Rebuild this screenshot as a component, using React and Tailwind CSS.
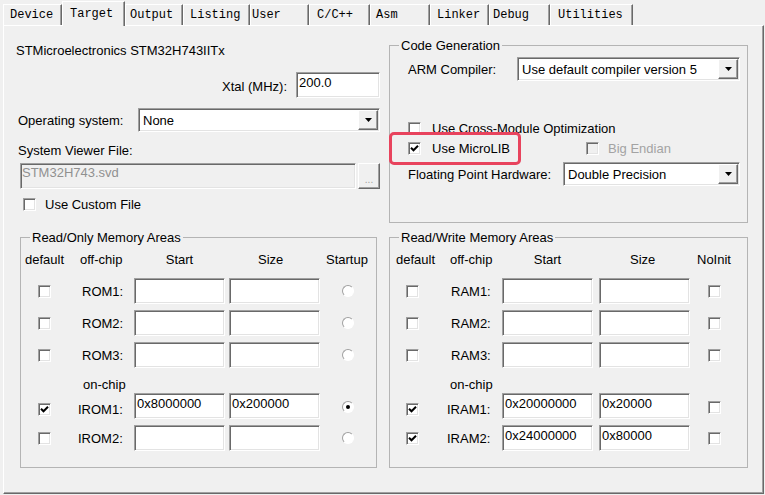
import React from 'react'

const sunken =
  'border border-t-[#a0a0a0] border-l-[#a0a0a0] border-r-white border-b-white shadow-[inset_1px_1px_0_#696969,inset_-1px_-1px_0_#e3e3e3]'
const raised =
  'border border-t-white border-l-white border-r-[#696969] border-b-[#696969] shadow-[inset_-1px_-1px_0_#a0a0a0]'

const tabs = [
  { label: 'Device', w: 'w-[59px]', pl: 'pl-[6px]' },
  { label: 'Target', w: 'w-[63px]', pl: 'pl-[7px]', active: true },
  { label: 'Output', w: 'w-[58px]', pl: 'pl-[4px]' },
  { label: 'Listing', w: 'w-[67px]', pl: 'pl-[6px]' },
  { label: 'User', w: 'w-[59px]', pl: 'pl-[1px]' },
  { label: 'C/C++', w: 'w-[61px]', pl: 'pl-[7px]' },
  { label: 'Asm', w: 'w-[60px]', pl: 'pl-[5px]' },
  { label: 'Linker', w: 'w-[59px]', pl: 'pl-[6px]' },
  { label: 'Debug', w: 'w-[61px]', pl: 'pl-[3px]' },
  { label: 'Utilities', w: 'w-[83px]', pl: 'pl-[7px]' },
]

const Tab = ({ label, w, pl, active }) => (
  <div
    className={`${w} ${pl} flex items-center bg-[#f0f0f0] border-t border-l border-r border-t-white border-l-white border-r-[#696969] shadow-[inset_-1px_0_0_#a0a0a0] font-['Liberation_Mono',monospace] text-[12px] ${
      active ? 'h-[25px] -mb-px relative z-10' : 'h-[21px]'
    }`}
  >
    {label}
  </div>
)

const Checkbox = ({ checked, disabled }) => (
  <div
    className={`w-[13px] h-[13px] shrink-0 ${sunken} ${
      disabled ? 'bg-[#f0f0f0]' : 'bg-white'
    } flex items-center justify-center`}
  >
    {checked && (
      <svg width="9" height="9" viewBox="0 0 9 9" className="block">
        <path d="M1 3.8L3.5 6.3L8 1.8" fill="none" stroke="#000" strokeWidth="2" />
      </svg>
    )}
  </div>
)

const Radio = ({ checked }) => (
  <div className="w-[12px] h-[12px] shrink-0 rounded-full border border-t-[#a0a0a0] border-l-[#a0a0a0] border-r-white border-b-white bg-white flex items-center justify-center">
    {checked && <div className="w-[4px] h-[4px] rounded-full bg-black" />}
  </div>
)

const Field = ({ value, className = '', disabled }) => (
  <div
    className={`${sunken} h-[26px] px-[2px] pt-[2px] whitespace-nowrap ${
      disabled ? 'bg-[#f0f0f0] text-[#909090]' : 'bg-white'
    } ${className}`}
  >
    {value}
  </div>
)

const Select = ({ value, className = '' }) => (
  <div className={`${sunken} bg-white h-[24px] flex p-[1px] ${className}`}>
    <div className="flex-1 flex items-center pl-[3px] whitespace-nowrap">{value}</div>
    <div className={`${raised} w-[20px] bg-[#f0f0f0] flex items-center justify-center`}>
      <svg width="7" height="4" viewBox="0 0 7 4" className="block">
        <path d="M0 0H7L3.5 4Z" fill="#000" />
      </svg>
    </div>
  </div>
)

const MemRow = ({ cols, label, labelCls, start, size, def, last, radio, low, className = '' }) => (
  <div className={`flex h-[26px] ${className}`}>
    <div className={`${cols.c1} flex items-center ${low ? 'pt-[6px]' : ''}`}>
      <Checkbox checked={def} />
    </div>
    <div className={`${cols.c2} ${labelCls} flex items-center ${low ? 'pt-[6px]' : ''}`}>{label}</div>
    <Field value={start} className="w-[91px]" />
    <Field value={size} className={`w-[91px] ${cols.gap}`} />
    <div className={`${cols.c5} flex items-center ${low ? 'pt-[2px]' : ''}`}>
      {radio ? <Radio checked={last} /> : <Checkbox checked={last} />}
    </div>
  </div>
)

const roCols = { c1: 'w-[55px] pl-[17px]', c2: 'w-[58px]', gap: 'ml-[4px]', c5: 'w-[55px] pl-[22px]' }
const rwCols = { c1: 'w-[57px] pl-[16px]', c2: 'w-[55px]', gap: 'ml-[6px]', c5: 'w-[56px] pl-[18px]' }

export default function App() {
  return (
    <div className="w-[765px] h-[495px] bg-[#f0f0f0] overflow-hidden text-[13px] leading-[15px] text-black font-['Liberation_Sans',Arial,sans-serif]">
      {/* Tabs */}
      <div className="flex items-end h-[25px] pl-[3px]">
        {tabs.map((t) => (
          <Tab key={t.label} {...t} />
        ))}
      </div>

      {/* Tab page */}
      <div className="ml-[3px] w-[761px] h-[469px] border border-t-white border-l-white border-r-[#696969] border-b-[#696969] shadow-[inset_-1px_-1px_0_#a0a0a0] pl-[12px] grid grid-cols-[364px_359px] grid-rows-[204px_238px] gap-x-[9px]">
        {/* Device info */}
        <div className="flex flex-col">
          <div className="mt-[17px]">STMicroelectronics STM32H743IITx</div>
          <div className="mt-[14px] flex items-center justify-end">
            <span className="mt-[3px]">Xtal (MHz):</span>
            <Field value="200.0" className="w-[84px] ml-[9px]" />
          </div>
          <div className="mt-[10px] flex items-center pl-[2px]">
            <span className="w-[120px]">Operating system:</span>
            <Select value="None" className="w-[242px]" />
          </div>
          <div className="mt-[11px] pl-[2px]">System Viewer File:</div>
          <div className="mt-[5px] flex pl-[4px]">
            <Field value="STM32H743.svd" disabled className="w-[336px] !px-[1px] !pt-[1px]" />
            <div className={`${raised} ml-[2px] w-[22px] h-[26px] flex items-end justify-center pb-[3px] text-[10px] leading-[10px] text-[#a0a0a0]`}>
              ...
            </div>
          </div>
          <div className="mt-[9px] flex items-center h-[13px] pl-[7px]">
            <Checkbox />
            <span className="ml-[9px]">Use Custom File</span>
          </div>
        </div>

        {/* Code Generation */}
        <div className="relative">
          <fieldset className="mt-[12px] h-[185px] border border-[#b4b4b4]">
            <legend className="ml-[9px] px-[2px]">Code Generation</legend>
            <div className="mt-[4px] flex items-center pl-[18px]">
              <span className="w-[109px]">ARM Compiler:</span>
              <Select value="Use default compiler version 5" className="w-[223px]" />
            </div>
            <div className="mt-[41px] flex items-center h-[13px] pl-[18px]">
              <Checkbox />
              <span className="ml-[11px] whitespace-nowrap">Use Cross-Module Optimization</span>
            </div>
            <div className="mt-[7px] flex items-center h-[13px] pl-[18px]">
              <Checkbox checked />
              <span className="ml-[11px] w-[154px]">Use MicroLIB</span>
              <Checkbox disabled />
              <span className="ml-[9px] text-[#a3a3a3]">Big Endian</span>
            </div>
            <div className="mt-[7px] flex items-center pl-[18px]">
              <span className="w-[155px] whitespace-nowrap">Floating Point Hardware:</span>
              <Select value="Double Precision" className="w-[177px]" />
            </div>
          </fieldset>
          {/* highlight marker */}
          <div className="absolute left-0 top-[106px] w-[132px] h-[33px] border-[3px] border-[#e8435d] rounded-[5px]" />
        </div>

        {/* Read/Only Memory Areas */}
        <fieldset className="ml-[4px] w-[357px] h-[238px] border border-[#b4b4b4]">
          <legend className="ml-[9px] px-[2px]">Read/Only Memory Areas</legend>
          <div className="mt-[7px] flex">
            <div className="w-[55px] pl-[4px]">default</div>
            <div className="w-[58px] pl-[4px]">off-chip</div>
            <div className="w-[91px] text-center">Start</div>
            <div className="w-[91px] ml-[4px] pl-[29px]">Size</div>
            <div className="w-[55px] pl-[6px]">Startup</div>
          </div>
          <MemRow cols={roCols} className="mt-[11px]" label="ROM1:" labelCls="pl-[6px]" radio />
          <MemRow cols={roCols} className="mt-[6px]" label="ROM2:" labelCls="pl-[6px]" radio />
          <MemRow cols={roCols} className="mt-[6px]" label="ROM3:" labelCls="pl-[6px]" radio />
          <div className="mt-[9px] pl-[62px]">on-chip</div>
          <MemRow
            cols={roCols}
            className="mt-[1px]"
            label="IROM1:"
            labelCls="pl-[2px]"
            start="0x8000000"
            size="0x200000"
            def
            last
            radio
            low
          />
          <MemRow cols={roCols} className="mt-[6px]" label="IROM2:" labelCls="pl-[2px]" radio />
        </fieldset>

        {/* Read/Write Memory Areas */}
        <fieldset className="w-[359px] h-[238px] border border-[#b4b4b4]">
          <legend className="ml-[9px] px-[2px]">Read/Write Memory Areas</legend>
          <div className="mt-[7px] flex">
            <div className="w-[57px] pl-[6px]">default</div>
            <div className="w-[55px] pl-[3px]">off-chip</div>
            <div className="w-[91px] text-center">Start</div>
            <div className="w-[91px] ml-[6px] pl-[31px]">Size</div>
            <div className="w-[56px] pl-[7px]">NoInit</div>
          </div>
          <MemRow cols={rwCols} className="mt-[11px]" label="RAM1:" labelCls="pl-[4px]" />
          <MemRow cols={rwCols} className="mt-[6px]" label="RAM2:" labelCls="pl-[4px]" />
          <MemRow cols={rwCols} className="mt-[6px]" label="RAM3:" labelCls="pl-[4px]" />
          <div className="mt-[9px] pl-[60px]">on-chip</div>
          <MemRow
            cols={rwCols}
            className="mt-[1px]"
            label="IRAM1:"
            labelCls="pl-[0px]"
            start="0x20000000"
            size="0x20000"
            def
            low
          />
          <MemRow
            cols={rwCols}
            className="mt-[6px]"
            label="IRAM2:"
            labelCls="pl-[0px]"
            start="0x24000000"
            size="0x80000"
            def
          />
        </fieldset>
      </div>
    </div>
  )
}
